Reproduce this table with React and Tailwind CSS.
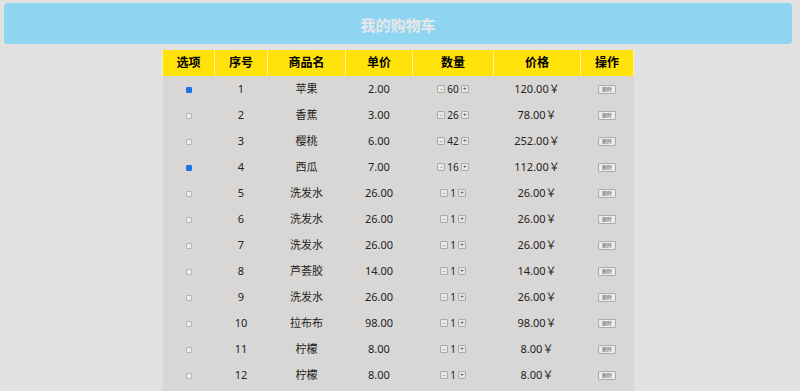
import { useState } from 'react';

const initialItems = [
  { id: 1, name: '苹果', price: 2, qty: 60, checked: true },
  { id: 2, name: '香蕉', price: 3, qty: 26, checked: false },
  { id: 3, name: '樱桃', price: 6, qty: 42, checked: false },
  { id: 4, name: '西瓜', price: 7, qty: 16, checked: true },
  { id: 5, name: '洗发水', price: 26, qty: 1, checked: false },
  { id: 6, name: '洗发水', price: 26, qty: 1, checked: false },
  { id: 7, name: '洗发水', price: 26, qty: 1, checked: false },
  { id: 8, name: '芦荟胶', price: 14, qty: 1, checked: false },
  { id: 9, name: '洗发水', price: 26, qty: 1, checked: false },
  { id: 10, name: '拉布布', price: 98, qty: 1, checked: false },
  { id: 11, name: '柠檬', price: 8, qty: 1, checked: false },
  { id: 12, name: '柠檬', price: 8, qty: 1, checked: false },
  { id: 13, name: '柠檬', price: 8, qty: 1, checked: false },
  { id: 14, name: '洗发水', price: 26, qty: 1, checked: false },
  { id: 15, name: '芦荟胶', price: 14, qty: 1, checked: false },
  { id: 16, name: '香蕉', price: 3, qty: 1, checked: false },
  { id: 17, name: '苹果', price: 2, qty: 1, checked: false },
  { id: 18, name: '西瓜', price: 7, qty: 1, checked: false },
];

const headers = ['选项', '序号', '商品名', '单价', '数量', '价格', '操作'];
const widths = ['w-[52px]', 'w-[53px]', 'w-[78px]', 'w-[67px]', 'w-[81px]', 'w-[87px]', 'w-[53px]'];

const App = () => {
  const [items, setItems] = useState(initialItems);

  const changeQty = (id, d) =>
    setItems(items.map((it) => (it.id === id ? { ...it, qty: Math.max(1, it.qty + d) } : it)));
  const toggle = (id) =>
    setItems(items.map((it) => (it.id === id ? { ...it, checked: !it.checked } : it)));
  const remove = (id) => setItems(items.filter((it) => it.id !== id));

  return (
    <div className="h-screen overflow-y-auto bg-[#e1e1e1] font-['Noto_Sans','Noto_Sans_CJK_SC',sans-serif]">
      <div className="pt-[3px] pb-4 pr-[4px]">
        {/* Header */}
        <div className="mx-1 h-[41px] rounded-[4px] bg-[#8ed5f2] flex items-center justify-center pt-[3px]">
          <h1 className="text-[15px] font-bold text-[#e8e8e8]">我的购物车</h1>
        </div>

        {/* Cart table */}
        <table className="mx-auto mt-[6px] border-collapse text-center text-[11px] text-[#222]">
          <thead>
            <tr className="bg-[#ffe20a] h-[26px]">
              {headers.map((h, i) => (
                <th
                  key={h}
                  className={`${widths[i]} font-bold text-[12px] text-black border-x border-[#fff3a0] p-0`}
                >
                  {h}
                </th>
              ))}
            </tr>
          </thead>
          <tbody className="bg-[#d9d7d6]">
            {items.map((it) => (
              <tr key={it.id} className="h-[26px]">
                <td className="p-0">
                  <input
                    type="checkbox"
                    checked={it.checked}
                    onChange={() => toggle(it.id)}
                    className="appearance-none w-[6px] h-[6px] m-0 align-middle rounded-[1px] border border-[#b5b5b5] bg-[#ececec] checked:bg-[#1a73e8] checked:border-[#1a73e8]"
                  />
                </td>
                <td className="p-0">{it.id}</td>
                <td className="p-0">{it.name}</td>
                <td className="p-0">{it.price.toFixed(2)}</td>
                <td className="p-0">
                  <div className="flex items-center justify-center gap-[1px]">
                    <button
                      onClick={() => changeQty(it.id, -1)}
                      className="w-[8px] h-[8px] border border-[#aaa] rounded-[1px] bg-[#e6e6e6] text-[6px] leading-none flex items-center justify-center"
                    >
                      -
                    </button>
                    <span className="text-[10px] px-[1px]">{it.qty}</span>
                    <button
                      onClick={() => changeQty(it.id, 1)}
                      className="w-[8px] h-[8px] border border-[#aaa] rounded-[1px] bg-[#e6e6e6] text-[6px] leading-none flex items-center justify-center"
                    >
                      +
                    </button>
                  </div>
                </td>
                <td className="p-0">{(it.price * it.qty).toFixed(2)}￥</td>
                <td className="p-0">
                  <button
                    onClick={() => remove(it.id)}
                    className="w-[18px] h-[9px] border border-[#aaa] rounded-[1px] bg-[#ececec] text-[5px] leading-none text-[#555] align-middle"
                  >
                    删除
                  </button>
                </td>
              </tr>
            ))}
          </tbody>
        </table>
      </div>
    </div>
  );
};

export default App;
